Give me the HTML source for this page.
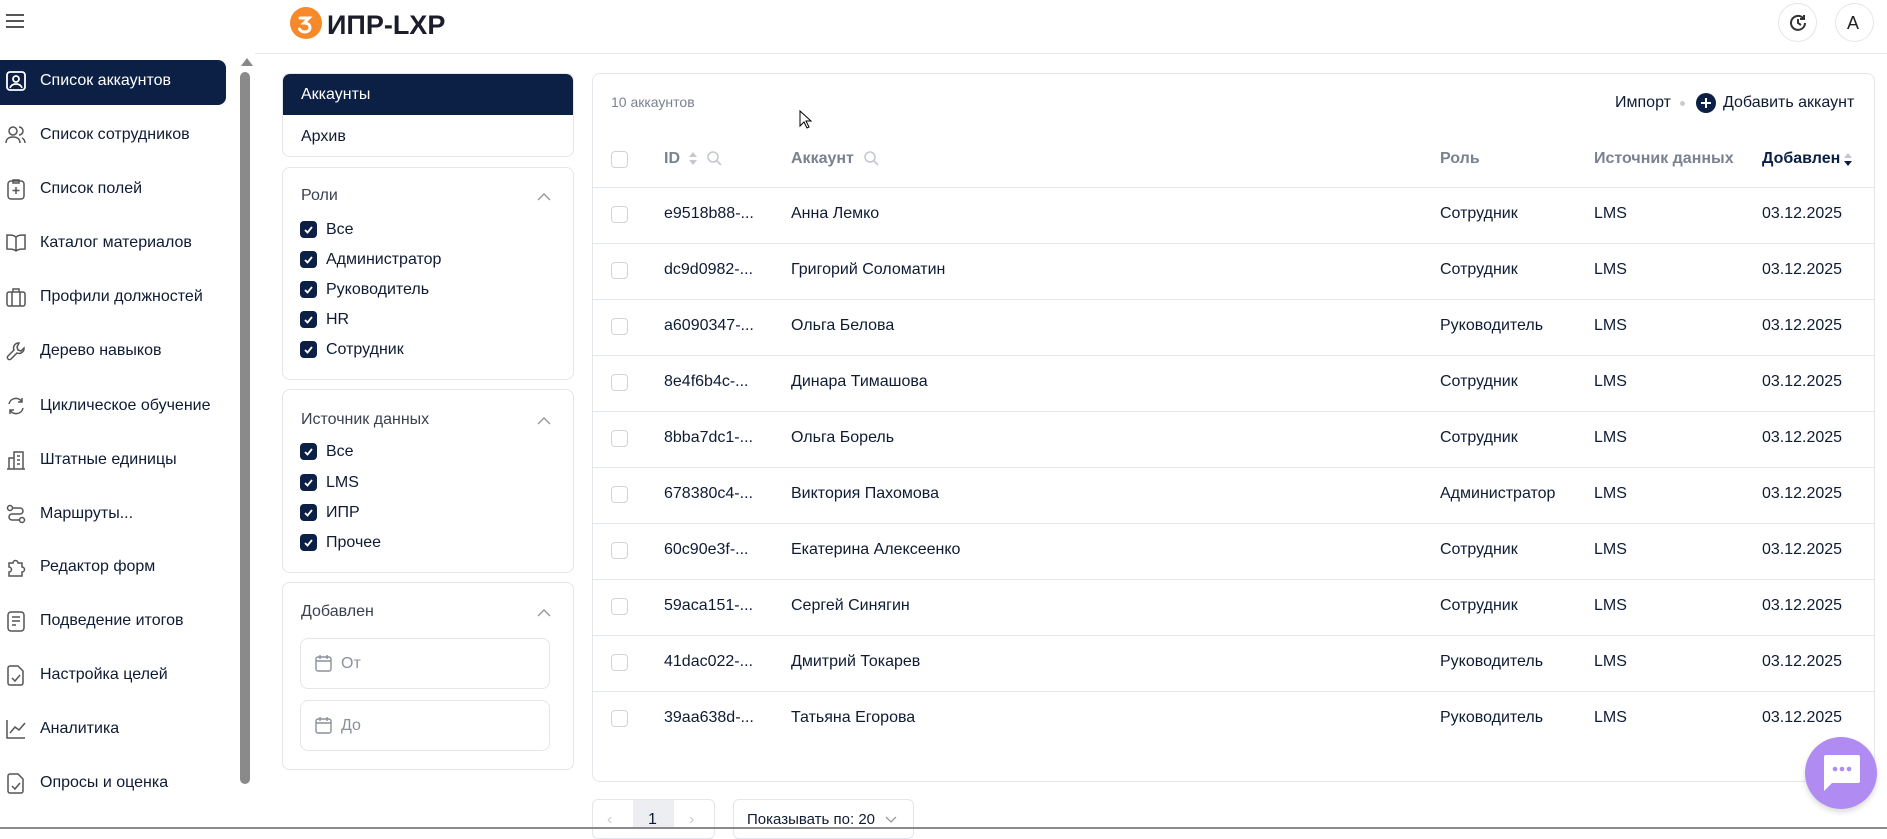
<!DOCTYPE html>
<html><head><meta charset="utf-8"><style>
*{box-sizing:border-box;margin:0;padding:0}
body{width:1887px;height:829px;overflow:hidden;background:#fff;font-family:"Liberation Sans",sans-serif;color:#0f1b33;font-size:16px;position:relative}
.a{position:absolute}
.t{position:absolute;white-space:nowrap;line-height:20px}
.card{position:absolute;border:1px solid #e3e6ea;border-radius:8px;background:#fff}
.cb{position:absolute;width:17px;height:17px;border-radius:4px;background:#0c1f45}
.cb svg{position:absolute;left:3px;top:3px}
.ecb{position:absolute;width:17px;height:17px;border-radius:4px;border:1px solid #cfd4da;background:#fff}
.hr{position:absolute;left:593px;width:1281px;height:1px;background:#e4e7eb}
.side svg{position:absolute;left:5px}
.gray{color:#7a8290}
</style></head><body>
<!-- header -->
<div class="a" style="left:6px;top:14px;width:18px;height:2px;background:#555;box-shadow:0 6px 0 #555,0 12px 0 #555"></div>
<div class="a" style="left:290px;top:7px;width:32px;height:32px;border-radius:50%;background:#f7892a"></div>
<svg class="a" style="left:290px;top:7px" width="32" height="32" viewBox="0 0 32 32"><path d="M10 11h9l-5 5c4 0 6 2 6 4.5S18 25 15 25s-5-1.5-5.5-3" fill="none" stroke="#fff" stroke-width="3" stroke-linecap="round"/></svg>
<div class="t" style="left:327px;top:11px;font-size:27px;line-height:28px;font-weight:bold;color:#1b1e2a">ИПР-LXP</div>
<div class="a" style="left:1778px;top:3px;width:39px;height:39px;border-radius:50%;border:1px solid #e3e6ea"></div>
<svg class="a" style="left:1787px;top:12px" width="22" height="22" viewBox="0 0 22 22" fill="none" stroke="#333" stroke-width="2"><path d="M18 11a7 7 0 1 1-2-5"/><path d="M11 7v4l3 2"/><path d="M17 3v4h-4"/></svg>
<div class="a" style="left:1835px;top:3px;width:39px;height:39px;border-radius:50%;border:1px solid #e3e6ea"></div>
<div class="t" style="left:1847px;top:13px;font-size:18px;color:#222">A</div>
<div class="a" style="left:255px;top:53px;width:1632px;height:1px;background:#e4e7eb"></div>

<!-- sidebar -->
<div class="a" style="left:0;top:60px;width:226px;height:45px;background:#0c1f45;border-radius:0 8px 8px 0"></div>
<div class="a" style="left:241px;top:58px;width:0;height:0;border-left:6px solid transparent;border-right:6px solid transparent;border-bottom:8px solid #888"></div>
<div class="a" style="left:240px;top:72px;width:10px;height:712px;border-radius:5px;background:#8a8a8a"></div>
<div class="side">
<svg style="top:70px" width="22" height="22" viewBox="0 0 22 22" fill="none" stroke="#fff" stroke-width="1.8"><rect x="2" y="2" width="18" height="18" rx="3"/><circle cx="11" cy="9" r="3"/><path d="M5 18c1-3 3-4 6-4s5 1 6 4"/></svg>
<div class="t" style="left:40px;top:71px;color:#fff">Список аккаунтов</div>
<svg style="top:124px" width="22" height="22" viewBox="0 0 22 22" fill="none" stroke="#555" stroke-width="1.5"><circle cx="8" cy="7" r="4"/><path d="M1 19c0-4 3-6 7-6s7 2 7 6M14 3a4 4 0 0 1 0 8M17 14c2 1 3 3 3 5"/></svg>
<div class="t" style="left:40px;top:125px">Список сотрудников</div>
<svg style="top:178px" width="22" height="22" viewBox="0 0 22 22" fill="none" stroke="#555" stroke-width="1.5"><rect x="3" y="3" width="16" height="18" rx="3"/><path d="M8 2h6v3H8zM11 9v7M7.5 12.5h7"/></svg>
<div class="t" style="left:40px;top:179px">Список полей</div>
<svg style="top:232px" width="22" height="22" viewBox="0 0 22 22" fill="none" stroke="#555" stroke-width="1.5"><path d="M11 5c-2-2-5-2-9-2v14c4 0 7 0 9 2 2-2 5-2 9-2V3c-4 0-7 0-9 2zM11 5v14"/></svg>
<div class="t" style="left:40px;top:233px">Каталог материалов</div>
<svg style="top:286px" width="22" height="22" viewBox="0 0 22 22" fill="none" stroke="#555" stroke-width="1.5"><rect x="2" y="6" width="18" height="14" rx="2"/><path d="M8 6V3h6v3M7 6v14M15 6v14"/></svg>
<div class="t" style="left:40px;top:287px">Профили должностей</div>
<svg style="top:340px" width="22" height="22" viewBox="0 0 22 22" fill="none" stroke="#555" stroke-width="1.5"><path d="M14 3a5 5 0 0 0-5 7L3 16a2 2 0 0 0 3 3l6-6a5 5 0 0 0 7-5l-3 3-3-1-1-3z"/></svg>
<div class="t" style="left:40px;top:341px">Дерево навыков</div>
<svg style="top:395px" width="22" height="22" viewBox="0 0 22 22" fill="none" stroke="#555" stroke-width="1.5"><path d="M4 9a7 7 0 0 1 13-2M18 13a7 7 0 0 1-13 2M17 3v4h-4M5 19v-4h4"/></svg>
<div class="t" style="left:40px;top:396px">Циклическое обучение</div>
<svg style="top:449px" width="22" height="22" viewBox="0 0 22 22" fill="none" stroke="#555" stroke-width="1.5"><path d="M2 20h18M4 20V9h5v11M9 20V3h9v17M12 7h3M12 11h3M12 15h3"/></svg>
<div class="t" style="left:40px;top:450px">Штатные единицы</div>
<svg style="top:503px" width="22" height="22" viewBox="0 0 22 22" fill="none" stroke="#555" stroke-width="1.5"><circle cx="5" cy="5" r="2.5"/><circle cx="17" cy="17" r="2.5"/><path d="M8 5h7a3 3 0 0 1 0 6H7a3 3 0 0 0 0 6h7"/></svg>
<div class="t" style="left:40px;top:504px">Маршруты...</div>
<svg style="top:556px" width="22" height="22" viewBox="0 0 22 22" fill="none" stroke="#555" stroke-width="1.5"><path d="M4 7h4a2.5 2.5 0 1 1 5 0h4v4a2.5 2.5 0 1 1 0 5v4H4v-4a2.5 2.5 0 1 0 0-5z"/></svg>
<div class="t" style="left:40px;top:557px">Редактор форм</div>
<svg style="top:610px" width="22" height="22" viewBox="0 0 22 22" fill="none" stroke="#555" stroke-width="1.5"><rect x="3" y="2" width="16" height="19" rx="3"/><path d="M7 7h8M7 11h8M7 15h4"/></svg>
<div class="t" style="left:40px;top:611px">Подведение итогов</div>
<svg style="top:664px" width="22" height="22" viewBox="0 0 22 22" fill="none" stroke="#555" stroke-width="1.5"><path d="M5 2h8l5 5v12a2 2 0 0 1-2 2H5a2 2 0 0 1-2-2V4a2 2 0 0 1 2-2zM7 14l3 3 5-6"/></svg>
<div class="t" style="left:40px;top:665px">Настройка целей</div>
<svg style="top:718px" width="22" height="22" viewBox="0 0 22 22" fill="none" stroke="#555" stroke-width="1.5"><path d="M2 2v18h18M5 15l5-6 4 3 6-7"/></svg>
<div class="t" style="left:40px;top:719px">Аналитика</div>
<svg style="top:772px" width="22" height="22" viewBox="0 0 22 22" fill="none" stroke="#555" stroke-width="1.5"><path d="M5 2h8l5 5v12a2 2 0 0 1-2 2H5a2 2 0 0 1-2-2V4a2 2 0 0 1 2-2zM7 14l3 3 5-6"/></svg>
<div class="t" style="left:40px;top:773px">Опросы и оценка</div>
</div>

<!-- filters -->
<div class="card" style="left:282px;top:73px;width:292px;height:84px;overflow:hidden">
<div class="a" style="left:0;top:0;width:292px;height:41px;background:#0c1f45"></div>
<div class="t" style="left:18px;top:11px;color:#fff">Аккаунты</div>
<div class="t" style="left:18px;top:53px">Архив</div>
</div>
<div class="card" style="left:282px;top:167px;width:292px;height:213px">
<div class="t" style="left:18px;top:18px;color:#3a4150">Роли</div>
<svg class="a" style="left:254px;top:24px" width="14" height="9"><path d="M1 8l6-6 6 6" fill="none" stroke="#999" stroke-width="1.4"/></svg>
</div>
<div class="card" style="left:282px;top:389px;width:292px;height:184px">
<div class="t" style="left:18px;top:20px;color:#3a4150">Источник данных</div>
<svg class="a" style="left:254px;top:26px" width="14" height="9"><path d="M1 8l6-6 6 6" fill="none" stroke="#999" stroke-width="1.4"/></svg>
</div>
<div class="card" style="left:282px;top:582px;width:292px;height:188px">
<div class="t" style="left:18px;top:19px;color:#3a4150">Добавлен</div>
<svg class="a" style="left:254px;top:25px" width="14" height="9"><path d="M1 8l6-6 6 6" fill="none" stroke="#999" stroke-width="1.4"/></svg>
<div class="card" style="left:17px;top:55px;width:250px;height:51px"><svg class="a" style="left:13px;top:14px" width="20" height="20" fill="none" stroke="#8a909a" stroke-width="1.4"><rect x="2" y="4" width="15" height="14" rx="2"/><path d="M2 8h15M6 2v4M13 2v4"/></svg><div class="t" style="left:40px;top:15px;color:#8a909a">От</div></div>
<div class="card" style="left:17px;top:117px;width:250px;height:51px"><svg class="a" style="left:13px;top:14px" width="20" height="20" fill="none" stroke="#8a909a" stroke-width="1.4"><rect x="2" y="4" width="15" height="14" rx="2"/><path d="M2 8h15M6 2v4M13 2v4"/></svg><div class="t" style="left:40px;top:15px;color:#8a909a">До</div></div>
</div>
<!-- checkboxes -->
<div class="cb" style="left:300px;top:221px"><svg width="11" height="11"><path d="M2 6l2.5 2.5L9 3" fill="none" stroke="#fff" stroke-width="1.8"/></svg></div><div class="t" style="left:326px;top:220px">Все</div>
<div class="cb" style="left:300px;top:251px"><svg width="11" height="11"><path d="M2 6l2.5 2.5L9 3" fill="none" stroke="#fff" stroke-width="1.8"/></svg></div><div class="t" style="left:326px;top:250px">Администратор</div>
<div class="cb" style="left:300px;top:281px"><svg width="11" height="11"><path d="M2 6l2.5 2.5L9 3" fill="none" stroke="#fff" stroke-width="1.8"/></svg></div><div class="t" style="left:326px;top:280px">Руководитель</div>
<div class="cb" style="left:300px;top:311px"><svg width="11" height="11"><path d="M2 6l2.5 2.5L9 3" fill="none" stroke="#fff" stroke-width="1.8"/></svg></div><div class="t" style="left:326px;top:310px">HR</div>
<div class="cb" style="left:300px;top:341px"><svg width="11" height="11"><path d="M2 6l2.5 2.5L9 3" fill="none" stroke="#fff" stroke-width="1.8"/></svg></div><div class="t" style="left:326px;top:340px">Сотрудник</div>
<div class="cb" style="left:300px;top:443px"><svg width="11" height="11"><path d="M2 6l2.5 2.5L9 3" fill="none" stroke="#fff" stroke-width="1.8"/></svg></div><div class="t" style="left:326px;top:442px">Все</div>
<div class="cb" style="left:300px;top:474px"><svg width="11" height="11"><path d="M2 6l2.5 2.5L9 3" fill="none" stroke="#fff" stroke-width="1.8"/></svg></div><div class="t" style="left:326px;top:473px">LMS</div>
<div class="cb" style="left:300px;top:504px"><svg width="11" height="11"><path d="M2 6l2.5 2.5L9 3" fill="none" stroke="#fff" stroke-width="1.8"/></svg></div><div class="t" style="left:326px;top:503px">ИПР</div>
<div class="cb" style="left:300px;top:534px"><svg width="11" height="11"><path d="M2 6l2.5 2.5L9 3" fill="none" stroke="#fff" stroke-width="1.8"/></svg></div><div class="t" style="left:326px;top:533px">Прочее</div>

<!-- table -->
<div class="card" style="left:592px;top:73px;width:1283px;height:709px"></div>
<div class="t gray" style="left:611px;top:92px;font-size:14px">10 аккаунтов</div>
<svg class="a" style="left:799px;top:110px" width="14" height="20"><path d="M1 1v15l4-4 3 6 2-1-3-6h5z" fill="#fff" stroke="#000" stroke-width="1"/></svg>
<div class="t" style="left:1615px;top:93px">Импорт</div>
<div class="a" style="left:1680px;top:101px;width:5px;height:5px;border-radius:50%;background:#ccc"></div>
<div class="a" style="left:1696px;top:93px;width:20px;height:20px;border-radius:50%;background:#0c1f45"></div>
<svg class="a" style="left:1696px;top:93px" width="20" height="20"><path d="M10 5v10M5 10h10" stroke="#fff" stroke-width="2"/></svg>
<div class="t" style="left:1723px;top:93px">Добавить аккаунт</div>

<div class="ecb" style="left:611px;top:151px"></div>
<div class="t gray" style="left:664px;top:149px;font-weight:bold">ID</div>
<svg class="a" style="left:688px;top:151px" width="10" height="15"><path d="M1 6l4-5 4 5zM1 9l4 5 4-5z" fill="#c5c9cf"/></svg>
<svg class="a" style="left:707px;top:151px" width="15" height="15" fill="none" stroke="#c5c9cf" stroke-width="1.6"><circle cx="6" cy="6" r="5"/><path d="M10 10l4 4"/></svg>
<div class="t gray" style="left:791px;top:149px;font-weight:bold">Аккаунт</div>
<svg class="a" style="left:864px;top:151px" width="15" height="15" fill="none" stroke="#c5c9cf" stroke-width="1.6"><circle cx="6" cy="6" r="5"/><path d="M10 10l4 4"/></svg>
<div class="t gray" style="left:1440px;top:149px;font-weight:bold">Роль</div>
<div class="t gray" style="left:1594px;top:149px;font-weight:bold">Источник данных</div>
<div class="t" style="left:1762px;top:149px;font-weight:bold;color:#0c1f45">Добавлен</div>
<svg class="a" style="left:1843px;top:152px" width="10" height="15"><path d="M1 6l4-5 4 5z" fill="#c5c9cf"/><path d="M1 9l4 5 4-5z" fill="#0c1f45"/></svg>
<div class="hr" style="top:187px"></div>

<div class="ecb" style="left:611px;top:206px"></div><div class="t" style="left:664px;top:204px">e9518b88-...</div><div class="t" style="left:791px;top:204px">Анна Лемко</div><div class="t" style="left:1440px;top:204px">Сотрудник</div><div class="t" style="left:1594px;top:204px">LMS</div><div class="t" style="left:1762px;top:204px">03.12.2025</div><div class="hr" style="top:243px"></div>
<div class="ecb" style="left:611px;top:262px"></div><div class="t" style="left:664px;top:260px">dc9d0982-...</div><div class="t" style="left:791px;top:260px">Григорий Соломатин</div><div class="t" style="left:1440px;top:260px">Сотрудник</div><div class="t" style="left:1594px;top:260px">LMS</div><div class="t" style="left:1762px;top:260px">03.12.2025</div><div class="hr" style="top:299px"></div>
<div class="ecb" style="left:611px;top:318px"></div><div class="t" style="left:664px;top:316px">a6090347-...</div><div class="t" style="left:791px;top:316px">Ольга Белова</div><div class="t" style="left:1440px;top:316px">Руководитель</div><div class="t" style="left:1594px;top:316px">LMS</div><div class="t" style="left:1762px;top:316px">03.12.2025</div><div class="hr" style="top:355px"></div>
<div class="ecb" style="left:611px;top:374px"></div><div class="t" style="left:664px;top:372px">8e4f6b4c-...</div><div class="t" style="left:791px;top:372px">Динара Тимашова</div><div class="t" style="left:1440px;top:372px">Сотрудник</div><div class="t" style="left:1594px;top:372px">LMS</div><div class="t" style="left:1762px;top:372px">03.12.2025</div><div class="hr" style="top:411px"></div>
<div class="ecb" style="left:611px;top:430px"></div><div class="t" style="left:664px;top:428px">8bba7dc1-...</div><div class="t" style="left:791px;top:428px">Ольга Борель</div><div class="t" style="left:1440px;top:428px">Сотрудник</div><div class="t" style="left:1594px;top:428px">LMS</div><div class="t" style="left:1762px;top:428px">03.12.2025</div><div class="hr" style="top:467px"></div>
<div class="ecb" style="left:611px;top:486px"></div><div class="t" style="left:664px;top:484px">678380c4-...</div><div class="t" style="left:791px;top:484px">Виктория Пахомова</div><div class="t" style="left:1440px;top:484px">Администратор</div><div class="t" style="left:1594px;top:484px">LMS</div><div class="t" style="left:1762px;top:484px">03.12.2025</div><div class="hr" style="top:523px"></div>
<div class="ecb" style="left:611px;top:542px"></div><div class="t" style="left:664px;top:540px">60c90e3f-...</div><div class="t" style="left:791px;top:540px">Екатерина Алексеенко</div><div class="t" style="left:1440px;top:540px">Сотрудник</div><div class="t" style="left:1594px;top:540px">LMS</div><div class="t" style="left:1762px;top:540px">03.12.2025</div><div class="hr" style="top:579px"></div>
<div class="ecb" style="left:611px;top:598px"></div><div class="t" style="left:664px;top:596px">59aca151-...</div><div class="t" style="left:791px;top:596px">Сергей Синягин</div><div class="t" style="left:1440px;top:596px">Сотрудник</div><div class="t" style="left:1594px;top:596px">LMS</div><div class="t" style="left:1762px;top:596px">03.12.2025</div><div class="hr" style="top:635px"></div>
<div class="ecb" style="left:611px;top:654px"></div><div class="t" style="left:664px;top:652px">41dac022-...</div><div class="t" style="left:791px;top:652px">Дмитрий Токарев</div><div class="t" style="left:1440px;top:652px">Руководитель</div><div class="t" style="left:1594px;top:652px">LMS</div><div class="t" style="left:1762px;top:652px">03.12.2025</div><div class="hr" style="top:691px"></div>
<div class="ecb" style="left:611px;top:710px"></div><div class="t" style="left:664px;top:708px">39aa638d-...</div><div class="t" style="left:791px;top:708px">Татьяна Егорова</div><div class="t" style="left:1440px;top:708px">Руководитель</div><div class="t" style="left:1594px;top:708px">LMS</div><div class="t" style="left:1762px;top:708px">03.12.2025</div>

<!-- pagination -->
<div class="card" style="left:592px;top:799px;width:123px;height:40px;border-radius:6px"></div>
<div class="a" style="left:633px;top:800px;width:41px;height:29px;background:#eceef1"></div>
<div class="t" style="left:607px;top:810px;color:#ccc">‹</div>
<div class="t" style="left:648px;top:810px">1</div>
<div class="t" style="left:689px;top:810px;color:#ccc">›</div>
<div class="card" style="left:733px;top:799px;width:181px;height:40px;border-radius:6px"></div>
<div class="t" style="left:747px;top:810px;font-size:15px">Показывать по: 20</div>
<svg class="a" style="left:885px;top:816px" width="12" height="8"><path d="M1 1l5 5 5-5" fill="none" stroke="#999" stroke-width="1.3"/></svg>
<div class="a" style="left:0;top:827px;width:1887px;height:2px;background:#8a8a8a"></div>

<!-- chat -->
<div class="a" style="left:1805px;top:737px;width:72px;height:72px;border-radius:50%;background:#b08cf2;box-shadow:0 3px 6px rgba(0,0,0,.15)"></div>
<svg class="a" style="left:1820px;top:753px" width="42" height="40"><path d="M4 2h34a2 2 0 0 1 2 2v24a2 2 0 0 1-2 2H12l-8 8V4a2 2 0 0 1 2-2z" fill="#fff"/><circle cx="15" cy="16" r="2.3" fill="#b08cf2"/><circle cx="22" cy="16" r="2.3" fill="#b08cf2"/><circle cx="29" cy="16" r="2.3" fill="#b08cf2"/></svg>
</body></html>
